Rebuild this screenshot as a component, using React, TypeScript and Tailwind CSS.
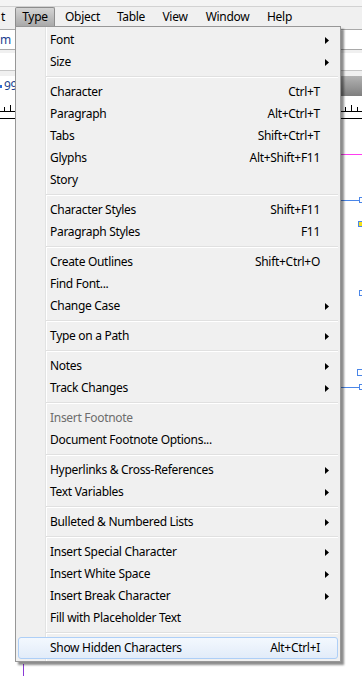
import React from "react";

const FONT = { fontFamily: '"Noto Sans", "Open Sans", sans-serif' };

const Arrow = () => (
  <svg width="4" height="7" viewBox="0 0 4 7" className="block">
    <path d="M0 0 L4 3.5 L0 7 Z" fill="#000" />
  </svg>
);

type ItemProps = {
  label: string;
  shortcut?: string;
  sub?: boolean;
  disabled?: boolean;
  hl?: boolean;
};

function Item({ label, shortcut, sub, disabled, hl }: ItemProps) {
  return (
    <div
      className={`relative mx-[2px] flex h-[22px] items-center rounded-[3px] border ${
        hl
          ? "border-[#aecff7] bg-gradient-to-b from-[#f3f8fe] to-[#e2ecf9]"
          : "border-transparent"
      } ${disabled ? "text-[#6d6d6d]" : "text-black"}`}
    >
      <span className="flex-1 whitespace-nowrap pl-[31px]">{label}</span>
      {shortcut && <span className="whitespace-nowrap">{shortcut}</span>}
      <span className="flex w-[17px] justify-start pl-[5px]">{sub && <Arrow />}</span>
    </div>
  );
}

const Sep = () => (
  <div className="h-[8px] pt-[3px]">
    <div className="ml-[30px] mr-[2px] h-px bg-[#e0e0e0]" />
    <div className="ml-[30px] mr-[2px] h-px bg-white" />
  </div>
);

const menuBar: { label: string; w: string }[] = [
  { label: "Object", w: "w-[49px]" },
  { label: "Table", w: "w-[42px]" },
  { label: "View", w: "w-[40px]" },
  { label: "Window", w: "w-[59px]" },
  { label: "Help", w: "w-[39px]" },
];

const Tick = ({ tall }: { tall?: boolean }) => (
  <div className={`w-px self-end bg-black ${tall ? "h-[6px]" : "h-[4px]"}`} />
);

export default function App() {
  return (
    <div
      className="relative h-[676px] w-[362px] overflow-hidden bg-white text-[12px] leading-none tracking-[-0.3px]"
      style={FONT}
    >
      {/* top strip */}
      <div className="h-[7px] border-b border-[#d2d2d2] bg-[#f4f4f4]" />
      {/* menu bar */}
      <div className="flex h-[19px] items-stretch bg-[#f0f0f0]">
        <div className="flex w-[15px] items-center pl-[1px]">t</div>
        <div className="flex w-[40px] items-center justify-center rounded-t-[2px] border border-b-0 border-[#8d8d8d] bg-gradient-to-b from-[#d4d4d4] to-[#a9a9a9]">
          Type
        </div>
        {menuBar.map((m) => (
          <div key={m.label} className={`ml-[3px] flex items-center justify-center ${m.w}`}>
            {m.label}
          </div>
        ))}
      </div>

      {/* background toolbars */}
      <div className="h-[3px] bg-[#f0f0f0]" />
      <div className="flex h-[21px] items-center border-y border-[#a9a9a9] bg-white text-[#1b3f8f]">
        m
      </div>
      <div className="h-[3px] bg-[#f0f0f0]" />
      <div className="h-[18px] border-b border-[#c6c6c6] bg-white" />
      <div className="h-[5px] bg-[#f0f0f0]" />
      <div className="flex h-[20px]">
        <div className="flex flex-1 items-center gap-[2px] bg-white">
          <div className="h-[3px] w-[2px] bg-[#2d6bd6]" />
          <span className="text-[#1b3f8f]">99</span>
        </div>
        <div className="w-[22px] bg-gradient-to-b from-[#b3b3b3] to-[#7f7f7f]" />
      </div>
      {/* ruler */}
      <div className="flex h-[24px] flex-col bg-white">
        <div className="flex h-[16px] justify-between border-b border-black px-[4px]">
          <div className="flex gap-[5px]">
            <Tick />
            <Tick tall />
          </div>
          <div className="flex gap-[5px]">
            <Tick />
            <Tick tall />
            <Tick />
          </div>
        </div>
        <div className="h-[6px]" />
        <div className="h-px bg-black" />
      </div>

      {/* canvas decorations on right */}
      <div className="absolute left-[340px] top-[154px] h-px w-[22px] bg-[#ff3df0]" />
      <div className="absolute left-[340px] top-[200px] h-px w-[19px] bg-[#4a86e8]" />
      <div className="absolute left-[359px] top-[197px] h-[6px] w-[6px] border border-[#4a86e8] bg-white" />
      <div className="absolute left-[358px] top-[221px] h-[6px] w-[6px] border border-[#4a86e8] bg-[#f5e21a]" />
      <div className="absolute left-[359px] top-[290px] h-[6px] w-[6px] border border-[#4a86e8] bg-white" />
      <div className="absolute left-[357px] top-[369px] h-[7px] w-[7px] border border-[#4a86e8] bg-white" />
      <div className="absolute left-[340px] top-[387px] h-px w-[19px] bg-[#4a86e8]" />
      <div className="absolute left-[359px] top-[384px] h-[6px] w-[6px] border border-[#4a86e8] bg-white" />
      <div className="absolute left-[23px] top-[664px] h-[12px] w-px bg-[#8a3ad6]" />

      {/* dropdown menu */}
      <div className="absolute left-[15px] top-[26px] w-[326px] border border-[#979797] bg-[#f0f0f0] py-[2px] shadow-[3px_3px_2px_rgba(0,0,0,0.45)]">
        <div className="absolute bottom-0 left-[29px] top-0 w-px bg-[#e2e3e3]" />
        <div className="absolute bottom-0 left-[30px] top-0 w-px bg-white" />
        <div className="relative">
          <Item label="Font" sub />
          <Item label="Size" sub />
          <Sep />
          <Item label="Character" shortcut="Ctrl+T" />
          <Item label="Paragraph" shortcut="Alt+Ctrl+T" />
          <Item label="Tabs" shortcut="Shift+Ctrl+T" />
          <Item label="Glyphs" shortcut="Alt+Shift+F11" />
          <Item label="Story" />
          <Sep />
          <Item label="Character Styles" shortcut="Shift+F11" />
          <Item label="Paragraph Styles" shortcut="F11" />
          <Sep />
          <Item label="Create Outlines" shortcut="Shift+Ctrl+O" />
          <Item label="Find Font..." />
          <Item label="Change Case" sub />
          <Sep />
          <Item label="Type on a Path" sub />
          <Sep />
          <Item label="Notes" sub />
          <Item label="Track Changes" sub />
          <Sep />
          <Item label="Insert Footnote" disabled />
          <Item label="Document Footnote Options..." />
          <Sep />
          <Item label="Hyperlinks & Cross-References" sub />
          <Item label="Text Variables" sub />
          <Sep />
          <Item label="Bulleted & Numbered Lists" sub />
          <Sep />
          <Item label="Insert Special Character" sub />
          <Item label="Insert White Space" sub />
          <Item label="Insert Break Character" sub />
          <Item label="Fill with Placeholder Text" />
          <Sep />
          <Item label="Show Hidden Characters" shortcut="Alt+Ctrl+I" hl />
        </div>
      </div>
    </div>
  );
}
